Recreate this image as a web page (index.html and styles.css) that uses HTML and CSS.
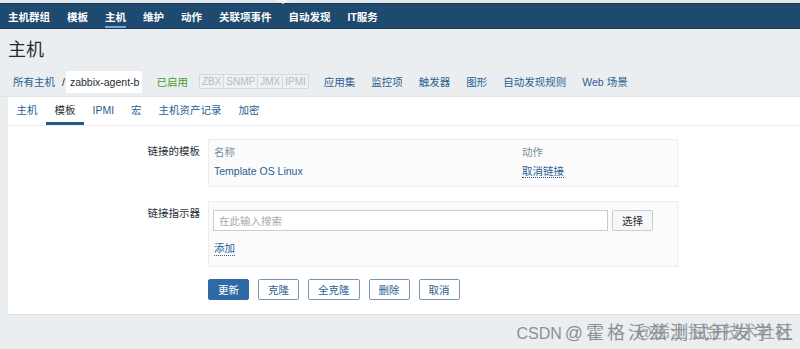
FILE: index.html
```html
<!DOCTYPE html>
<html lang="zh-CN">
<head>
  <meta charset="UTF-8">
  <title>主机</title>
  <link rel="stylesheet" href="styles.css">
</head>
<body>
  <!-- 顶部菜单 -->
  <div class="topbar">
    <span class="notch"></span>
    <nav class="main-nav">
      <a>主机群组</a>
      <a>模板</a>
      <a class="active">主机</a>
      <a>维护</a>
      <a>动作</a>
      <a>关联项事件</a>
      <a>自动发现</a>
      <a>IT服务</a>
    </nav>
  </div>

  <h1 class="page-title">主机</h1>

  <!-- 主机导航 -->
  <div class="host-nav">
    <a class="link">所有主机</a>
    <span class="sep">/</span>
    <span class="current">zabbix-agent-b</span>
    <span class="status">已启用</span>
    <span class="avail">
      <span>ZBX</span><span>SNMP</span><span>JMX</span><span>IPMI</span>
    </span>
    <a class="link">应用集</a>
    <a class="link">监控项</a>
    <a class="link">触发器</a>
    <a class="link">图形</a>
    <a class="link">自动发现规则</a>
    <a class="link">Web 场景</a>
  </div>

  <div class="panel">
    <div class="tabs">
      <a>主机</a>
      <a class="active">模板</a>
      <a>IPMI</a>
      <a>宏</a>
      <a>主机资产记录</a>
      <a>加密</a>
    </div>

    <div class="form">
      <div class="form-row">
        <label class="form-label">链接的模板</label>
        <div class="form-box">
          <table class="tpl-table">
            <tr><th>名称</th><th>动作</th></tr>
            <tr><td><a class="link">Template OS Linux</a></td><td><a class="link dotted">取消链接</a></td></tr>
          </table>
        </div>
      </div>

      <div class="form-row">
        <label class="form-label">链接指示器</label>
        <div class="form-box box-search">
          <div class="search-line">
            <input type="text" class="search" placeholder="在此输入搜索">
            <button class="btn-gray">选择</button>
          </div>
          <a class="link dotted add">添加</a>
        </div>
      </div>

      <div class="form-actions">
        <button class="btn primary">更新</button>
        <button class="btn">克隆</button>
        <button class="btn">全克隆</button>
        <button class="btn">删除</button>
        <button class="btn">取消</button>
      </div>
    </div>
  </div>

  <div class="watermark">
    <span class="wm-latin">CSDN</span> <span class="wm-cjk">@霍格沃兹测试开发学社</span>
    <span class="wm-over">@稀土掘金技术社区</span>
  </div>
</body>
</html>
```

FILE: styles.css
```css
/* 页面 */
html, body {
  margin: 0;
  padding: 0;
  background-color: #ebeef0;
  font-family: "Liberation Sans", "Noto Sans CJK SC", Arial, sans-serif;
  font-size: 10.5px;
  color: #1f2c33;
}

a {
  cursor: pointer;
}

/* 顶部菜单 */
.topbar {
  position: relative;
  padding-top: 3px;
  background-color: #e4e8eb;
}

.notch {
  position: absolute;
  left: 277px;
  top: 0;
  width: 0;
  height: 0;
  border-left: 6px solid transparent;
  border-right: 6px solid transparent;
  border-top: 4px solid #f4f6f7;
  z-index: 2;
}

.main-nav {
  display: flex;
  gap: 17px;
  height: 26px;
  padding-left: 8px;
  background-color: #1f4a6f;
  border-top: 1px solid #163a59;
  border-bottom: 1px solid #163a59;
  box-sizing: border-box;
}

.main-nav a {
  display: flex;
  align-items: center;
  color: #fff;
  font-weight: bold;
  font-size: 10.5px;
  border-bottom: 2px solid transparent;
  padding-top: 2px;
}

.main-nav a.active {
  border-bottom-color: #7aa7d2;
}

/* 标题 */
.page-title {
  margin: 0;
  padding: 9px 8px 0;
  height: 29px;
  font-size: 18px;
  font-weight: normal;
  line-height: 24px;
  color: #1f2c33;
}

/* 主机导航 */
.host-nav {
  display: flex;
  align-items: center;
  height: 30px;
  padding-left: 13px;
  border-bottom: 1px solid #dfe4e7;
  box-sizing: border-box;
}

.link {
  color: #2a5e93;
  text-decoration: none;
}

.host-nav .link {
  margin-right: 16px;
}

.host-nav .link:first-child {
  margin-right: 7px;
}

.sep {
  margin-right: 1px;
}

.current {
  background-color: #fff;
  padding: 5px 3px 5px 4px;
  margin-right: 14px;
}

.status {
  color: #4a9a2c;
  margin-right: 11px;
}

.avail {
  display: flex;
  margin-right: 16px;
}

.avail span {
  color: #b8bcbf;
  border: 1px solid #d5d9dc;
  background-color: #eef0f2;
  padding: 1px 2px;
  margin-right: -1px;
  font-size: 10px;
}

/* 内容面板 */
.panel {
  margin-left: 8px;
  background-color: #fff;
  border-bottom: 1px solid #dfe4e7;
}

.tabs {
  display: flex;
  height: 29px;
  border-bottom: 1px solid #eceff1;
  box-sizing: border-box;
  background-color: #fff;
}

.tabs a {
  display: flex;
  align-items: center;
  padding: 0 8.5px;
  color: #2a5e93;
  border-bottom: 3px solid transparent;
}

.tabs a.active {
  color: #1f2c33;
  border-bottom-color: #24578a;
}

/* 表单 */
.form {
  padding: 13px 0 14px;
}

.form-row {
  display: flex;
  align-items: flex-start;
  margin-bottom: 14px;
}

.form-label {
  width: 200px;
  text-align: right;
  padding-top: 5px;
  padding-right: 8px;
  box-sizing: border-box;
  line-height: 14px;
}

.form-box {
  width: 470px;
  background-color: #fbfbfb;
  border: 1px solid #ebeef0;
  box-sizing: border-box;
  padding: 3px 4px 6px;
}

.tpl-table {
  width: 100%;
  border-collapse: collapse;
}

.tpl-table th {
  text-align: left;
  font-weight: normal;
  color: #768d99;
  padding: 2px 1px 4px;
  line-height: 14px;
}

.tpl-table th:first-child {
  width: 306px;
}

.tpl-table td {
  padding: 1px 1px 2px;
  line-height: 14px;
}

.dotted {
  border-bottom: 1px dotted #2a5e93;
}

.box-search {
  padding: 8px 4px 10px;
}

.search-line {
  display: flex;
  gap: 4px;
}

.search {
  width: 395px;
  height: 21px;
  border: 1px solid #c8cdd1;
  background-color: #fff;
  padding: 0 5px;
  font-family: inherit;
  font-size: 10.5px;
  box-sizing: border-box;
}

.search::placeholder {
  color: #a4abb0;
}

.btn-gray {
  width: 41px;
  height: 21px;
  border: 1px solid #c8cdd1;
  border-radius: 2px;
  background-color: #f7f7f7;
  font-family: inherit;
  font-size: 10.5px;
  color: #1f2c33;
  padding: 0;
}

.add {
  display: inline-block;
  margin-top: 10px;
  margin-left: 1px;
  line-height: 14px;
}

.form-actions {
  display: flex;
  gap: 9px;
  padding-left: 200px;
  margin-top: -2px;
}

.btn {
  height: 21px;
  padding: 0 9px;
  border: 1px solid #7a96b3;
  border-radius: 2px;
  background-color: #fff;
  color: #2a5e93;
  font-family: inherit;
  font-size: 10.5px;
}

.btn.primary {
  background-color: #2f6aa6;
  border-color: #2f6aa6;
  color: #fff;
}

/* 水印 */
.watermark {
  position: relative;
  text-align: right;
  padding: 8px 7px 0 0;
  line-height: 20px;
  color: #8c9196;
  white-space: nowrap;
}

.wm-latin {
  font-size: 16px;
}

.wm-cjk {
  font-size: 18px;
  letter-spacing: 3px;
  margin-right: -3px;
}

.wm-over {
  position: absolute;
  right: 7px;
  top: 8px;
  font-size: 17px;
  letter-spacing: 0.5px;
  color: #8c9196;
  opacity: 0.8;
}
```
